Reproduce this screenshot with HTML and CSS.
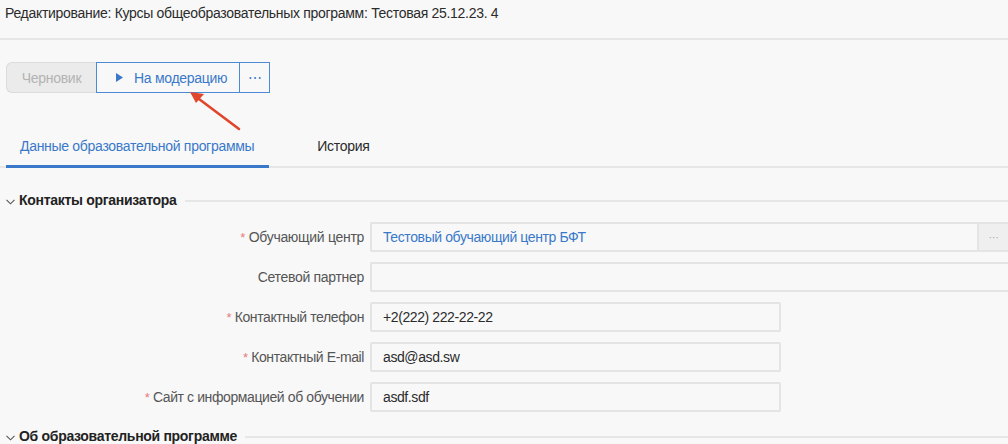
FILE: index.html
```html
<!DOCTYPE html>
<html lang="ru">
<head>
<meta charset="utf-8">
<link rel="stylesheet" href="styles.css">
</head>
<body>
<div class="page">
  <header class="header">
    <h1 class="title">Редактирование: Курсы общеобразовательных программ: Тестовая 25.12.23. 4</h1>
  </header>

  <div class="toolbar">
    <button class="btn btn-draft">Черновик</button>
    <button class="btn btn-moderate">
      <svg class="play" width="7" height="9" viewBox="0 0 7 9"><path d="M0 0 L7 4.5 L0 9 Z" fill="#3a78c9"/></svg>
      На модерацию
    </button>
    <button class="btn btn-more">⋯</button>
  </div>

  <nav class="tabs">
    <div class="tab tab-active">Данные образовательной программы</div>
    <div class="tab">История</div>
  </nav>

  <section class="section">
    <div class="section-head">
      <svg class="chev" width="9" height="6" viewBox="0 0 9 6"><path d="M0.5 0.8 L4.5 4.8 L8.5 0.8" fill="none" stroke="#555" stroke-width="1.1"/></svg>
      <span class="section-title">Контакты организатора</span>
      <span class="section-line"></span>
    </div>

    <div class="form">
      <div class="row">
        <label class="label"><span class="req">*</span> Обучающий центр</label>
        <div class="field field-wide">
          <span class="value value-link">Тестовый обучающий центр БФТ</span>
          <span class="field-btn">···</span>
        </div>
      </div>
      <div class="row">
        <label class="label">Сетевой партнер</label>
        <div class="field field-wide"></div>
      </div>
      <div class="row">
        <label class="label narrow"><span class="req">*</span> Контактный телефон</label>
        <div class="field field-mid"><span class="value narrow">+2(222) 222-22-22</span></div>
      </div>
      <div class="row">
        <label class="label narrow"><span class="req">*</span> Контактный E-mail</label>
        <div class="field field-mid"><span class="value narrow">asd@asd.sw</span></div>
      </div>
      <div class="row">
        <label class="label narrow"><span class="req">*</span> Сайт с информацией об обучении</label>
        <div class="field field-mid"><span class="value narrow">asdf.sdf</span></div>
      </div>
    </div>
  </section>

  <section class="section section-2">
    <div class="section-head">
      <svg class="chev" width="9" height="6" viewBox="0 0 9 6"><path d="M0.5 0.8 L4.5 4.8 L8.5 0.8" fill="none" stroke="#555" stroke-width="1.1"/></svg>
      <span class="section-title">Об образовательной программе</span>
      <span class="section-line"></span>
    </div>
  </section>

  <svg class="arrow" width="60" height="45" viewBox="0 0 60 45">
    <line x1="55" y1="41" x2="15" y2="11" stroke="#e0462b" stroke-width="2.6" stroke-linecap="round"/>
    <path d="M6 4 L20 6 L12 15 Z" fill="#e0462b"/>
  </svg>
</div>
</body>
</html>
```

FILE: styles.css
```css
* { box-sizing: border-box; }
html, body {
  margin: 0;
  padding: 0;
  background: #f8f8f8;
  font-family: "Liberation Sans", Arial, sans-serif;
  color: #333;
  overflow: hidden;
}
.page {
  position: relative;
  width: 1008px;
  height: 444px;
  overflow: hidden;
  letter-spacing: -0.3px;
}
.header {
  height: 40px;
  border-bottom: 2px solid #e6e6e6;
  padding: 4px 0 0 5px;
}
.title {
  margin: 0;
  font-size: 14px;
  font-weight: normal;
  line-height: 18px;
  color: #2b2b2b;
  letter-spacing: -0.3px;
}
.toolbar {
  display: flex;
  margin: 22px 0 0 6px;
  height: 31px;
}
.btn {
  font-family: "Liberation Sans", Arial, sans-serif;
  font-size: 14px;
  letter-spacing: -0.3px;
  height: 31px;
  margin: 0;
  padding: 0;
  background: #f8f8f8;
  display: flex;
  align-items: center;
  cursor: pointer;
}
.btn-draft {
  width: 90px;
  justify-content: center;
  background: #ebebeb;
  border: 1px solid #dcdcdc;
  border-radius: 6px 0 0 6px;
  color: #b3b3b3;
  border-right: none;
}
.btn-moderate {
  width: 144px;
  border: 1px solid #4d8ad6;
  color: #3a78c9;
  padding-left: 19px;
}
.play { margin-right: 11px; }
.btn-more {
  width: 30px;
  justify-content: center;
  border: 1px solid #4d8ad6;
  border-left: none;
  color: #3a78c9;
  font-size: 14px;
}
.tabs {
  display: flex;
  margin-top: 32px;
  border-bottom: 2px solid #e6e6e6;
  height: 43px;
  padding-left: 6px;
}
.tab {
  font-size: 14px;
  line-height: 20px;
  padding: 11px 48px 0 48px;
  color: #2b2b2b;
  height: 43px;
}
.tab-active {
  color: #3a78c9;
  padding: 11px 15px 0 14px;
  border-bottom: 3px solid #3a78c9;
  margin-bottom: -2px;
}
.section-head {
  display: flex;
  align-items: center;
  height: 20px;
  padding-left: 6px;
  margin-top: 22px;
}
.chev { margin-right: 4px; margin-top: 3px; }
.section-title {
  font-weight: bold;
  font-size: 14px;
  color: #222;
}
.section-line {
  flex: 1;
  height: 2px;
  background: #e6e6e6;
  margin-left: 8px;
  margin-top: 2px;
}
.form {
  margin-top: 12px;
  display: flex;
  flex-direction: column;
  gap: 10px;
}
.row {
  display: flex;
  align-items: center;
  height: 30px;
}
.label {
  width: 364px;
  text-align: right;
  font-size: 14px;
  color: #555;
  flex-shrink: 0;
}
.req { color: #e57c7c; font-size: 13px; }
.label.narrow, .value.narrow { letter-spacing: -0.4px; }
.field {
  margin-left: 6px;
  height: 30px;
  border: 2px solid #e4e4e4;
  border-radius: 2px;
  background: #f8f8f8;
  display: flex;
  align-items: center;
  flex-shrink: 0;
}
.field-wide { width: 650px; border-right: none; }
.field-mid { width: 411px; }
.value {
  font-size: 14px;
  padding-left: 11px;
  color: #2b2b2b;
  flex: 1;
}
.value-link { color: #3a78c9; letter-spacing: -0.4px; }
.field-btn {
  width: 31px;
  height: 100%;
  border-left: 2px solid #e4e4e4;
  background: #efefef;
  color: #aaa;
  font-size: 11px;
  display: flex;
  align-items: center;
  justify-content: center;
  margin-right: 12px;
}
.section-2 .section-head { margin-top: 14px; }
.arrow {
  position: absolute;
  left: 184px;
  top: 88px;
}
```
